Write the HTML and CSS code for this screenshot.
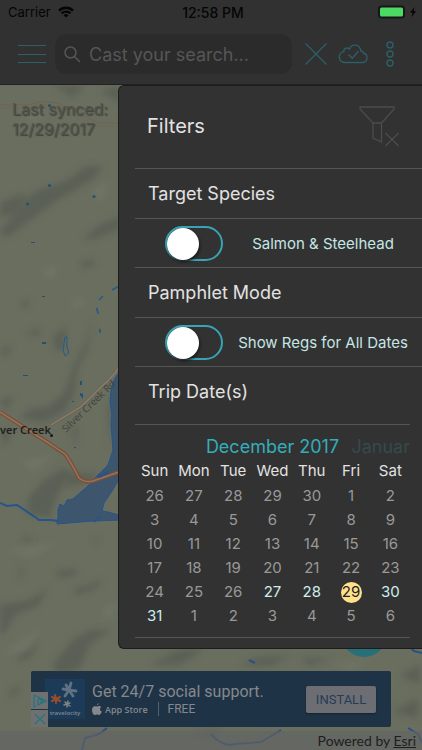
FILE: index.html
```html
<!DOCTYPE html>
<html lang="en">
<head>
<meta charset="utf-8">
<meta name="viewport" content="width=device-width, initial-scale=1">
<title>Filters</title>
<link rel="stylesheet" href="styles.css">
</head>
<body>
<div class="app">
  <header class="top">
    <div class="status">
      <span class="carrier">Carrier
        <svg width="16" height="12" viewBox="0 0 16 12" fill="none" stroke="#050505" stroke-width="2.3"><path d="M1 4.6a10 10 0 0 1 14 0M3.6 7.3a6.4 6.4 0 0 1 8.8 0"/><path d="M8 11.6 5.6 9.2a3.4 3.4 0 0 1 4.8 0z" fill="#050505" stroke="none"/></svg>
      </span>
      <time class="clock">12:58 PM</time>
      <svg class="battery" width="40" height="14" viewBox="0 0 40 14"><rect x="1" y="1.500" width="25" height="11" rx="2.500" fill="#4cd964" stroke="#171717" stroke-width="2"/><path d="M28 5v4q1.500-.5 1.500-2T28 5z" fill="#4a2424"/><path d="M36.500 2 32 7.600h2.600L33.500 12l4.700-5.800h-2.700z" fill="#050505"/></svg>
    </div>
    <div class="toolbar">
      <button class="icon" aria-label="Menu"><svg width="28" height="20" viewBox="0 0 28 20" stroke="#2c5f68"><path d="M0 1.500h28M0 10.500h28M0 18.500h28"/></svg></button>
      <label class="search">
        <svg width="17" height="17" viewBox="0 0 17 17" fill="none" stroke="#565656" stroke-width="1.500"><circle cx="6.500" cy="6.500" r="5.500"/><path d="m10.500 10.500 5.500 5.500"/></svg>
        <input type="text" aria-label="Search" placeholder="Cast your search...">
      </label>
      <button class="icon" aria-label="Clear"><svg width="22" height="22" viewBox="0 0 22 22" stroke="#2c5f68" stroke-width="1.200"><path d="m.5.5 21 21m0-21-21 21"/></svg></button>
      <button class="icon" aria-label="Sync"><svg width="30" height="20" viewBox="0 0 30 20" fill="none" stroke="#2c5f68" stroke-width="1.400"><path d="M6.500 18.500a5.500 5.500 0 0 1-.7-10.900C5.400 4.500 9 2.800 11.500 5 13.500-.5 22-.4 22.700 7c1.700-.3 2.800.7 2.800 2.200 2.200.4 3.500 2.300 3.500 4.500 0 2.800-2 4.800-4.500 4.800z"/><path d="m10.500 10.500 3.800 3.800 6-7"/></svg></button>
      <button class="icon" aria-label="More"><svg width="8" height="26" viewBox="0 0 8 26" fill="none" stroke="#2c5f68" stroke-width="1.400"><circle cx="4" cy="4" r="3"/><circle cx="4" cy="13" r="3"/><circle cx="4" cy="22" r="3"/></svg></button>
    </div>
  </header>

  <main class="map">
    <svg class="terrain" viewBox="0 85 422 665" preserveAspectRatio="xMinYMin slice" aria-hidden="true">
      <defs>
        <filter id="soft" x="-20%" y="-20%" width="140%" height="140%"><feGaussianBlur stdDeviation="3"/></filter>
        <path id="road" d="M66 433Q91 409 130 371"/>
      </defs>
      <rect y="85" width="422" height="665" fill="#696e5f"/>
      <g filter="url(#soft)" fill="#575b52" opacity=".75">
        <path d="M55 85q10 8 18 12l12-12zM100 90l20-5v18zM0 203q20-10 28-8L16 213 0 218zM34 192l34-12 18-14 18 0-12 14-34 20-30 22-20 15-10-4 20-22zM82 240l16-14 22-10v12l-22 10zM80 262l12-3 4 6-14 3z"/>
        <path d="M20 303l10-4-4 10zM24 334l16-6-2 8zM54 336l12-10-2 26-10-4zM92 318l-4 32-10 18-4 26-10 18-20 10-24-4 10-9 18-2 16-14 10-28 12-22zM0 400l14-4-8 14zM0 350l12-5-6 12zM72 432l6-8-2 22zM108 410l6-20-4 60zM0 430l12 4-8 12z"/>
        <path d="M28 498l14-16 20-14 10 4-16 26-6 20-22-4zM70 474l30 0-8 6-26 8zM20 536l14 2-8 5zM18 572l6-8-4 18zM92 540l7-1-2 5zM58 570l20-1-4 7-18 2zM72 590l20-6 12-6-8 10-18 7zM0 605l30-5 18-12-10 18-22 8-12 20-4 0zM52 666l20-26 18-10 22 0-22 14-10 24-20 8zM24 650l14-7-8 14-14 6z"/>
        <path d="M150 665l30-16 24 0-24 16zM240 665l20-8 30-1-20 10zM300 658l30 0-20 8zM400 676l20-12v20zM392 712l26-14v20zM190 735l30-6-8 8zM10 690l14-5-14 14z"/>
      </g>
      <g filter="url(#soft)" fill="#747969" opacity=".55"><path d="M20 110l30 4-20 10zM90 190l20-8-8 20zM40 270l20-5-8 15zM70 300l18-2-12 12zM20 460l34-4-20 16zM10 550l50-8-30 16zM100 610l18-8-8 20zM0 655l40-28-12 24zM330 664l40-4-20 12z"/></g>
      <g fill="none" stroke="#75614f"><path d="M0 105h28q16-6 32-1l24 12 14 7h22"/><path d="M0 108h28q16-6 32-1l22 12 14 7h24" stroke-width=".5"/></g>
      <g fill="none" stroke="#6c5a4e"><path d="M119 367q-6 10-18 20L82 406 51 425" stroke-width="3"/><path d="M119 367q-6 10-18 20L82 406 51 425" stroke="#817b69" stroke-width="2"/></g>
      <path fill="#3d566d" stroke="#24558b" d="M122 370q-12 9-12 33 3 11 1 22l2 25-5 15-10 10-11 12-6 5-8 7-6 1-3 6-4-2-2 6v7l-1 7 35-3 30-1v-4l-14-4-6-1 2-8 8-12 10-17z"/>
      <path fill="none" stroke="#24558b" stroke-width="2" d="M0 503l7 3 10-1 18 12 4 3h12l7 1"/>
      <path fill="none" stroke="#24558b" d="M93 521l6-5 2 1-6 5z"/>
      <path fill="none" stroke="#75503b" stroke-width="4" d="M0 412l47 30 18 12q6 8 14 24 6 5 14 3l26-9"/>
      <path fill="none" stroke="#9b7257" stroke-width="1.500" d="M0 412l47 30 18 12q6 8 14 24 6 5 14 3l26-9"/>
      <g fill="#244f7a"><circle cx="49.500" cy="105.500" r="1.500"/><circle cx="49.500" cy="185.500" r="1.500"/><circle cx="27.500" cy="204" r="1.500"/><circle cx="94" cy="196.500" r="1.500"/><path d="M31 242h4v1h-4zM42 296h3v1h-3zM42 342h4v2h-4zM23 375h5v1h-5zM96 307l3 7-2-1zM99 328l2 4-2 1zM80 381h2v4h-2zM80 393l3 1v5l-3-4zM72 401h2v1h-2zM74 447h2v1h-2z"/></g>
      <path fill="none" stroke="#285b8a" stroke-width="1.500" d="M119 286l-7 4M103 296l-4 4M97 308l1 5M100 329v4"/>
      <path fill="none" stroke="#285b8a" d="M65 337h2v10l2 6-4 3-2-6z"/>
      <path stroke="#24558b" stroke-width="3" d="M98 477l11-5"/>
      <g fill="none" stroke="#2b5184" stroke-width="2"><path d="M249 660l6 3M409 646l5 5 8 2M107 728l-8 6-14 4-3 12M408 728l10 6 4 9M211 734q12 14 24 10l14-1 12-1 20-12"/></g>
      <circle cx="364" cy="634" r="23" fill="#277078"/>
      <text class="road-name"><textPath href="#road">Silver Creek Rd</textPath></text>
      <text class="town" x="0" y="434">ver Creek</text>
      <circle cx="51.500" cy="435.500" r="1.500" fill="#171714"/>
    </svg>
    <p class="synced">Last synced:<br>12/29/2017</p>

    <section class="drawer">
      <div class="title">
        <h1>Filters</h1>
        <button class="icon" aria-label="Clear filters"><svg width="40" height="40" viewBox="0 0 40 40" fill="none" stroke="#4c4c4c" stroke-width="1.300"><path d="M1 1h34v2L22.500 17v19L14 32V17L1 3zM14 17h8.500M26.500 27l13 13m0-13-13 13"/></svg></button>
      </div>
      <h2>Target Species</h2>
      <div class="option">
        <input type="checkbox" role="switch" id="salmon"><label for="salmon">Salmon &amp; Steelhead</label>
      </div>
      <h2>Pamphlet Mode</h2>
      <div class="option">
        <input type="checkbox" role="switch" id="regs"><label for="regs">Show Regs for All Dates</label>
      </div>
      <h2>Trip Date(s)</h2>
      <div class="calendar">
        <div class="months"><span></span><strong>December 2017</strong><span class="next">Januar</span></div>
        <table>
          <thead><tr><th>Sun</th><th>Mon</th><th>Tue</th><th>Wed</th><th>Thu</th><th>Fri</th><th>Sat</th></tr></thead>
          <tbody>
            <tr><td>26</td><td>27</td><td>28</td><td>29</td><td>30</td><td>1</td><td>2</td></tr>
            <tr><td>3</td><td>4</td><td>5</td><td>6</td><td>7</td><td>8</td><td>9</td></tr>
            <tr><td>10</td><td>11</td><td>12</td><td>13</td><td>14</td><td>15</td><td>16</td></tr>
            <tr><td>17</td><td>18</td><td>19</td><td>20</td><td>21</td><td>22</td><td>23</td></tr>
            <tr><td>24</td><td>25</td><td>26</td><td><button>27</button></td><td><button>28</button></td><td><button class="today">29</button></td><td><button>30</button></td></tr>
            <tr><td><button>31</button></td><td>1</td><td>2</td><td>3</td><td>4</td><td>5</td><td>6</td></tr>
          </tbody>
        </table>
      </div>
    </section>

    <aside class="ad">
      <div class="brand">
        <svg width="32" height="28" viewBox="0 0 32 28" stroke-linecap="round"><g stroke="#5f7182" stroke-width="2.800"><path d="M20 9 22 2M20 9l7 1M20 9l4 6M20 9l-4 6M20 9l-6-1M20 9l-3-5"/></g><g stroke="#994d29" stroke-width="2"><path d="m7 18-1-4M7 18l4-2M7 18l4 2M7 18l0 4M7 18l-4 2M7 18l-4-2"/></g><g stroke="#838383" stroke-width="1.500"><path d="m18 23 1-3M18 23l3-1M18 23l3 2M18 23l0 3M18 23l-3 1M18 23l-2-2"/></g></svg>
        <span>travelocity</span>
      </div>
      <div class="pitch">
        <p class="headline">Get 24/7 social support.</p>
        <p class="store">
          <svg width="10" height="12" viewBox="0 0 10 12" fill="#85888c"><path d="M6.800 0q.2 1.700-1.700 2.600Q5 1 6.800 0zM5 3.500c.8 0 2.800-1.400 4.300.5-2 1.300-1.500 3.900.6 4.600C9 11 8 12 7 12c-.8 0-1-.5-2-.5s-1.200.5-2 .5C1 12-.5 8 .2 5.500.9 3 3 2.900 5 3.500z"/></svg>
          <b>App Store</b><span class="free">FREE</span>
        </p>
      </div>
      <button class="install">INSTALL</button>
      <div class="ad-tools">
        <button aria-label="Ad choices"><svg width="14" height="14" viewBox="0 0 14 14" fill="none" stroke="#257580" stroke-width="1.300"><path d="M1 1v12l2-1M1 1l12 6-8 4V5M5 4l5 3-3 2"/></svg></button>
        <button aria-label="Close ad"><svg width="12" height="12" viewBox="0 0 12 12" stroke="#257580" stroke-width="1.300"><path d="m1 1 10 10m0-10L1 11"/></svg></button>
      </div>
    </aside>

    <footer class="credit">Powered by&nbsp;<a href="#">Esri</a></footer>
  </main>
</div>
</body>
</html>
```
FILE: styles.css
```css
* { box-sizing: border-box; }

body {
  margin: 0;
  background: #333;
  font-family: Inter, Roboto, "Liberation Sans", sans-serif;
}

h1, h2, p { margin: 0; font-weight: 400; }

button {
  border: 0;
  padding: 0;
  background: none;
  font: inherit;
  color: inherit;
}

svg { display: block; flex: none; }

.app {
  display: flex;
  flex-direction: column;
  min-height: 100vh;
}

.top {
  height: 85px;
  background: #313131;
  border-bottom: 1px solid #222;
}

.status {
  display: grid;
  grid-template-columns: 1fr auto 1fr;
  align-items: center;
  height: 24px;
  padding: 0 4px 0 8px;
  font-size: 13px;
  color: #050505;
}

.carrier { display: flex; align-items: center; gap: 7px; }
.clock { font-size: 14px; font-weight: 500; }
.battery { justify-self: end; }

.toolbar {
  display: flex;
  align-items: center;
  height: 60px;
  padding: 0 28px 0 18px;
}

.icon { display: flex; flex: none; }

.search {
  display: flex;
  flex: 1;
  align-items: center;
  gap: 8px;
  min-width: 0;
  height: 40px;
  margin: 0 13px 0 9px;
  padding: 0 9px;
  border-radius: 12px;
  background: #2b2b2b;
}

.search input {
  flex: 1;
  min-width: 0;
  padding: 0;
  border: 0;
  background: none;
  color: #565656;
  font: 400 18px Inter, sans-serif;
}

.search input::placeholder { color: #565656; opacity: 1; }
.toolbar .search + .icon { margin-right: 11px; }
.toolbar .icon:last-child { margin-left: 18px; }

.map {
  position: relative;
  flex: 1;
  display: flex;
  flex-direction: column;
}

.terrain {
  position: absolute;
  inset: 0;
  width: 100%;
  height: 100%;
}

.road-name { font: 10px "Noto Sans", sans-serif; fill: #44463f; }
.town { font: 600 11px "Noto Sans", sans-serif; fill: #20211e; }

.synced {
  position: absolute;
  top: 14px;
  left: 12px;
  color: #50534c;
  font-size: 16px;
  line-height: 20px;
  text-shadow: 1px 1px 1px #3e413a;
}

.drawer {
  position: relative;
  margin-left: 118px;
  padding: 0 0 10px 16px;
  border: 1px solid #1c1c1c;
  border-right: 0;
  border-radius: 6px 0 0 6px;
  background: #323232;
  color: #e2e2e2;
}

.title {
  display: flex;
  align-items: center;
  justify-content: space-between;
  height: 82px;
  padding: 0 23px 2px 12px;
}

h1 { font-size: 20px; }

h2 {
  height: 50px;
  padding-left: 13px;
  border-top: 1px solid #555;
  font-size: 18px;
  line-height: 49px;
}

.option {
  display: flex;
  align-items: center;
  height: 49px;
  padding: 0 11px 0 30px;
  border-top: 1px solid #555;
  color: #c4e6e5;
  font-size: 15px;
}

.option label { flex: 1; padding-left: 12px; text-align: center; white-space: nowrap; }

.option input {
  flex: none;
  width: 58px;
  height: 35px;
  margin: 0;
  padding: 1px;
  border: 2px solid #36a4b4;
  border-radius: 18px;
  appearance: none;
}

.option input::before {
  content: "";
  display: block;
  width: 32px;
  height: 32px;
  margin: -1px;
  border-radius: 50%;
  background: #fff;
  box-shadow: 1px 2px 3px #1a1a1a;
}

.option input:checked::before { margin-left: 22px; }

.calendar {
  margin: 8px 12px 0 0;
  padding: 10px 0 9px;
  border: solid #555;
  border-width: 1px 0;
}

.months {
  display: grid;
  grid-template-columns: 1fr auto 1fr;
  height: 23px;
  font-size: 18px;
  line-height: 23px;
  color: #32aebb;
}

.months strong { font-weight: 400; }
.next { justify-self: end; color: #344b4e; }

table {
  width: 100%;
  border-collapse: collapse;
  table-layout: fixed;
  font-size: 15px;
  line-height: 20px;
  text-align: center;
}

th, td { height: 24px; padding: 0; }
th { height: 26px; font-weight: 400; }
td { color: #999; }
td button { color: #cdeeee; }

td .today {
  width: 21px;
  height: 21px;
  margin: 0 -4px;
  border-radius: 50%;
  background: #ffe18b;
  color: #222;
}

.ad {
  position: relative;
  display: flex;
  align-items: center;
  height: 56px;
  margin: auto 31px 4px;
  padding: 0 15px 0 14px;
  border-radius: 2px;
  background: #1f3347;
  color: #85888c;
  font-family: Roboto, sans-serif;
}

.ad-tools {
  position: absolute;
  bottom: 0;
  left: 0;
  display: grid;
  gap: 1px;
}

.ad-tools button {
  display: grid;
  place-items: center;
  width: 17px;
  height: 17px;
  background: #707070;
}

.brand {
  display: grid;
  justify-items: center;
  align-content: center;
  width: 40px;
  height: 40px;
  background: #1b3b58;
  font: 600 6px/9px "Open Sans", sans-serif;
}

.pitch { flex: 1; padding-left: 7px; }
.headline { font-size: 16px; line-height: 20px; white-space: nowrap; }

.store {
  display: flex;
  align-items: center;
  gap: 3px;
  line-height: 18px;
}

.store b { font: 600 9px "Open Sans", sans-serif; }

.free {
  margin-left: 7px;
  padding-left: 9px;
  border-left: 1px solid #536270;
  font-size: 12px;
  line-height: 14px;
}

.install {
  width: 70px;
  height: 27px;
  border-radius: 2px;
  background: #6c6e73;
  box-shadow: 0 1px 2px #15212d;
  color: #263c55;
  font-size: 13px;
}

.credit {
  position: relative;
  height: 19px;
  padding-right: 6px;
  background: rgb(100 100 100 / 65%);
  color: #1e1e1e;
  font: 14px/19px Lato, sans-serif;
  text-align: right;
}

.credit a { color: inherit; }
```
